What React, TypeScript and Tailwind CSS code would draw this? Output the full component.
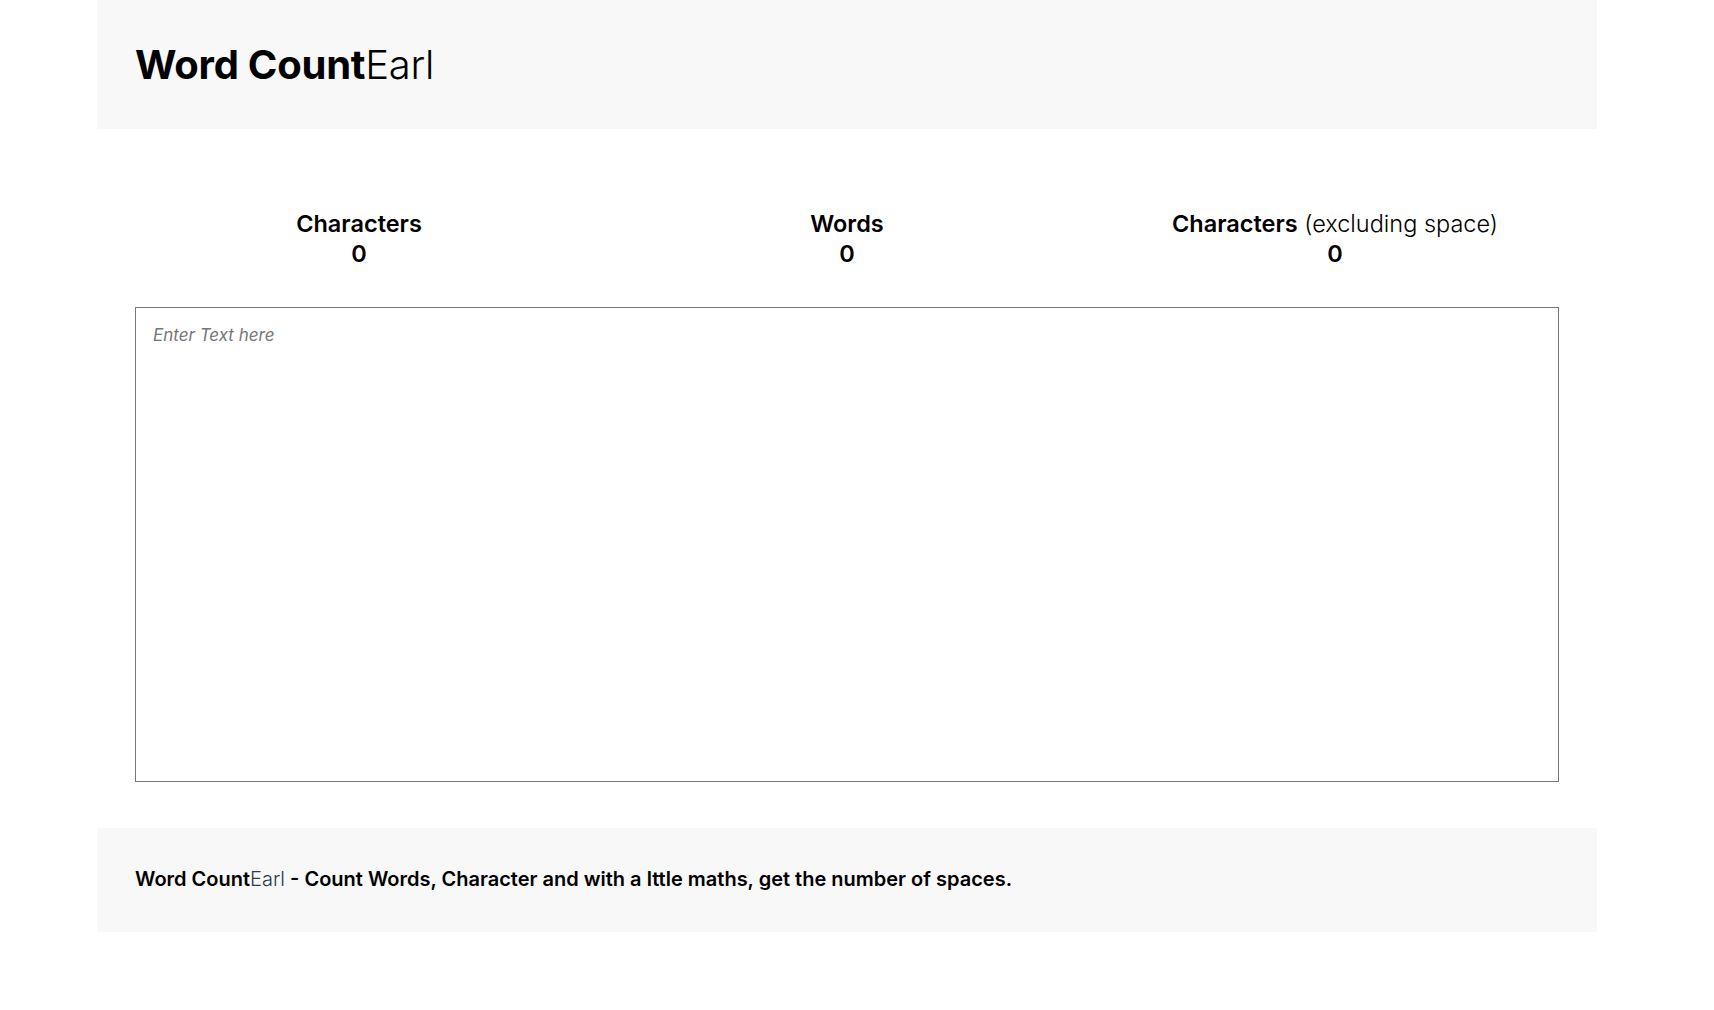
import React, { useState } from 'react';

export default function App() {
  const [text, setText] = useState('');

  const chars = text.length;
  const words = text.trim() === '' ? 0 : text.trim().split(/\s+/).length;
  const noSpace = text.replace(/\s/g, '').length;

  return (
    <div className="min-h-screen bg-white font-['Inter',sans-serif] text-black">
      <div className="ml-[97px] w-[1500px]">
        <header className="flex h-[129px] items-center bg-[#f8f8f8] px-[38px]">
          <h1 className="text-[40px] leading-none tracking-[-0.006em]">
            <span className="font-bold">Word Count</span>
            <span className="font-light">Earl</span>
          </h1>
        </header>

        <main className="px-[38px]">
          <div className="mt-[80px] grid grid-cols-3 gap-10 text-center text-[23.5px] leading-[30px]">
            <div>
              <p className="font-semibold">Characters</p>
              <p className="font-semibold">{chars}</p>
            </div>
            <div>
              <p className="font-semibold">Words</p>
              <p className="font-semibold">{words}</p>
            </div>
            <div>
              <p>
                <span className="font-semibold">Characters</span>{' '}
                <span className="font-light">(excluding space)</span>
              </p>
              <p className="font-semibold">{noSpace}</p>
            </div>
          </div>

          <textarea
            value={text}
            onChange={(e) => setText(e.target.value)}
            placeholder="Enter Text here"
            className="mt-[38px] block h-[475px] w-full resize-none border border-[#767676] px-[17px] py-[15px] text-[17px] outline-none placeholder:italic placeholder:text-[#767676]"
          />
        </main>

        <footer className="mt-[46px] flex h-[104px] items-center bg-[#f8f8f8] px-[38px] pb-[2px]">
          <p className="text-[20px] font-semibold">
            Word Count<span className="font-light text-[#2f3a4a]">Earl</span> - Count Words, Character and with a lttle maths, get the number of spaces.
          </p>
        </footer>
      </div>
    </div>
  );
}
